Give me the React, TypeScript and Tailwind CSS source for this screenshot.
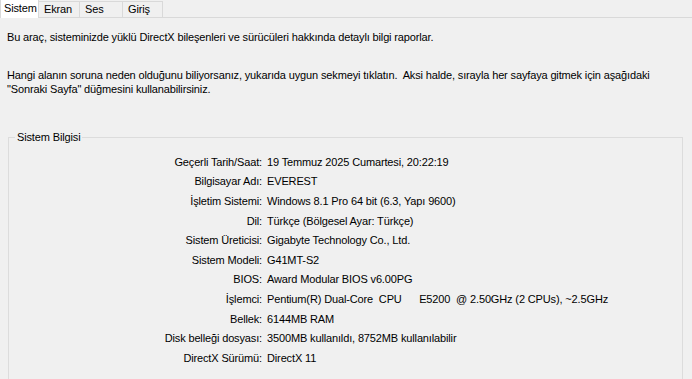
const tabs = ['Sistem', 'Ekran', 'Ses', 'Giriş'];

const rows: [string, string][] = [
  ['Geçerli Tarih/Saat:', '19 Temmuz 2025 Cumartesi, 20:22:19'],
  ['Bilgisayar Adı:', 'EVEREST'],
  ['İşletim Sistemi:', 'Windows 8.1 Pro 64 bit (6.3, Yapı 9600)'],
  ['Dil:', 'Türkçe (Bölgesel Ayar: Türkçe)'],
  ['Sistem Üreticisi:', 'Gigabyte Technology Co., Ltd.'],
  ['Sistem Modeli:', 'G41MT-S2'],
  ['BIOS:', 'Award Modular BIOS v6.00PG'],
  ['İşlemci:', 'Pentium(R) Dual-Core  CPU      E5200  @ 2.50GHz (2 CPUs), ~2.5GHz'],
  ['Bellek:', '6144MB RAM'],
  ['Disk belleği dosyası:', '3500MB kullanıldı, 8752MB kullanılabilir'],
  ['DirectX Sürümü:', 'DirectX 11'],
];

export default function App() {
  return (
    <div className="w-[692px] h-[379px] overflow-hidden bg-[#f0f0f0] text-black text-[11px] leading-[14px] tracking-[-0.14px] font-['Liberation_Sans',Arial,sans-serif]">
      {/* tab strip */}
      <div className="flex items-end h-[18px] border-b border-[#d9d9d9]">
        {tabs.map((t, i) =>
          i === 0 ? (
            <div
              key={t}
              className="h-[19px] -mb-px w-[39px] bg-white border border-b-0 border-[#d9d9d9] pl-[3px] pt-[1px] leading-[15px]"
            >
              {t}
            </div>
          ) : (
            <div
              key={t}
              className="h-[16px] bg-[#f0f0f0] border border-l-0 border-b-0 border-[#d9d9d9] px-[5px] leading-[15px]"
              style={{ width: [0, 41, 43, 40][i] }}
            >
              {t}
            </div>
          )
        )}
      </div>

      <div className="px-[7px]">
        <p className="mt-[12px]">
          Bu araç, sisteminizde yüklü DirectX bileşenleri ve sürücüleri hakkında detaylı bilgi raporlar.
        </p>
        <p className="mt-[24px]">
          Hangi alanın soruna neden olduğunu biliyorsanız, yukarıda uygun sekmeyi tıklatın.&nbsp; Aksi halde, sırayla her sayfaya gitmek için aşağıdaki
          <br />
          "Sonraki Sayfa" düğmesini kullanabilirsiniz.
        </p>
      </div>

      {/* group box */}
      <div className="relative mt-[41px] ml-[8px] w-[675px] h-[260px] border border-[#dcdcdc] pt-[14px]">
        <span className="absolute -top-[8px] left-[6px] bg-[#f0f0f0] px-[2px]">Sistem Bilgisi</span>
        <div className="flex flex-col">
          {rows.map(([k, v]) => (
            <div key={k} className="flex items-center h-[19.6px]">
              <div className="w-[253px] text-right">{k}</div>
              <div className="pl-[5px] whitespace-pre">{v}</div>
            </div>
          ))}
        </div>
      </div>
    </div>
  );
}
